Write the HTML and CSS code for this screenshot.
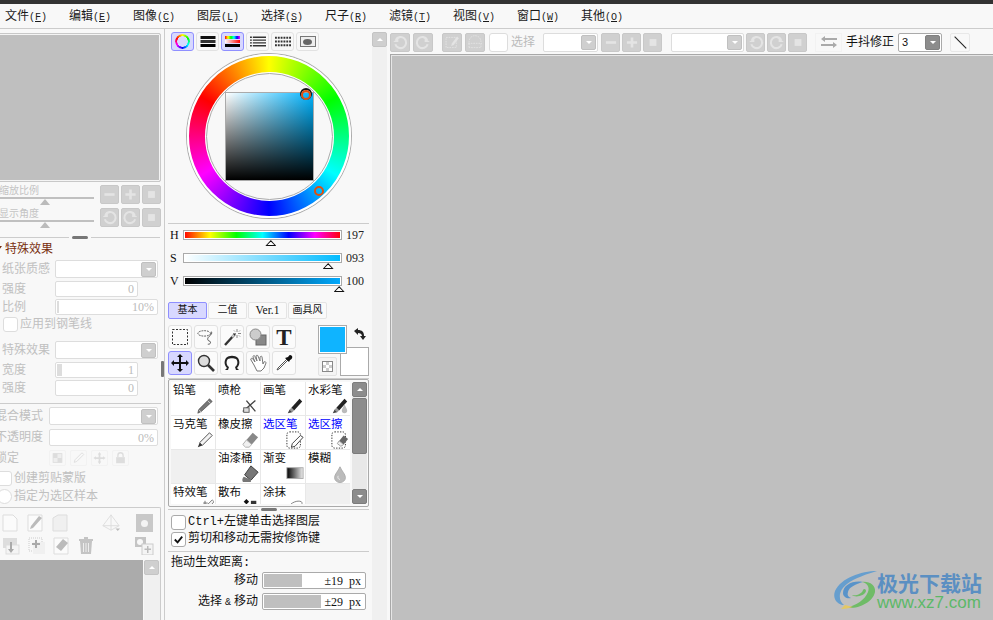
FILE: index.html
```html
<!DOCTYPE html>
<html lang="zh">
<head>
<meta charset="utf-8">
<title>SAI</title>
<link rel="stylesheet" href="styles.css">
</head>
<body>
<svg class="defs" width="0" height="0">
  <symbol id="minus" viewBox="0 0 20 20"><rect x="4" y="8.5" width="12" height="3" fill="#e4e4e4"/></symbol>
  <symbol id="plus" viewBox="0 0 20 20"><path d="M4 8.5h4.5V4h3v4.5H16v3h-4.5V16h-3v-4.5H4z" fill="#e4e4e4"/></symbol>
  <symbol id="square" viewBox="0 0 20 20"><rect x="6" y="6" width="8" height="8" fill="#e4e4e4"/></symbol>
  <symbol id="rotl" viewBox="0 0 20 20"><path d="M5 7a6.5 6.5 0 1 1-.5 5" fill="none" stroke="#e4e4e4" stroke-width="2.4"/><path d="M2 9.500h6v-5z" fill="#e4e4e4"/></symbol>
  <symbol id="rotr" viewBox="0 0 20 20"><path d="M15 7a6.500 6.500 0 1 0 .5 5" fill="none" stroke="#e4e4e4" stroke-width="2.400"/><path d="M18 9.500h-6v-5z" fill="#e4e4e4"/></symbol>
  <symbol id="pencil" viewBox="0 0 20 20"><path d="M15 2l3 3L6 16l-4 2 1-4z" fill="#777" stroke="#444" stroke-width=".7"/><path d="M13 4l3 3" stroke="#ddd"/><path d="M3 14l3 3" stroke="#ccc"/></symbol>
  <symbol id="pen" viewBox="0 0 20 20"><path d="M15 2l3 3-9 10-3-3z" fill="#222"/><path d="M6 12l3 3-2 2-3-3z" fill="#999"/><path d="M4 14l3 3-5 1z" fill="#444"/></symbol>
  <symbol id="drop" viewBox="0 0 20 20"><path d="M10 2c2 5 6 8 6 12a6 5.500 0 0 1-12 0c0-4 4-7 6-12z" fill="#bbb" stroke="#aaa"/><path d="M8 12c-1 2 0 4 2 4" stroke="#eee" fill="none"/></symbol>
</svg>

<div class="topline"></div>
<nav class="menu">
  <span class="menu-item">文件<i>(<u>F</u>)</i></span>
  <span class="menu-item">编辑<i>(<u>E</u>)</i></span>
  <span class="menu-item">图像<i>(<u>C</u>)</i></span>
  <span class="menu-item">图层<i>(<u>L</u>)</i></span>
  <span class="menu-item">选择<i>(<u>S</u>)</i></span>
  <span class="menu-item">尺子<i>(<u>R</u>)</i></span>
  <span class="menu-item">滤镜<i>(<u>T</u>)</i></span>
  <span class="menu-item">视图<i>(<u>V</u>)</i></span>
  <span class="menu-item">窗口<i>(<u>W</u>)</i></span>
  <span class="menu-item">其他<i>(<u>O</u>)</i></span>
</nav>

<main class="main">
  <aside class="left">
    <div class="preview"></div>
    <div class="nav-row first">
      <div class="nav-slider"><span class="nav-label">缩放比例</span><div class="nav-track"><b class="nav-tri"></b></div></div>
      <div class="dbtns">
        <span class="dbtn"><svg><use href="#minus"/></svg></span><span class="dbtn"><svg><use href="#plus"/></svg></span><span class="dbtn"><svg><use href="#square"/></svg></span>
      </div>
    </div>
    <div class="nav-row">
      <div class="nav-slider"><span class="nav-label">显示角度</span><div class="nav-track"><b class="nav-tri"></b></div></div>
      <div class="dbtns">
        <span class="dbtn"><svg><use href="#rotl"/></svg></span><span class="dbtn"><svg><use href="#rotr"/></svg></span><span class="dbtn"><svg><use href="#square"/></svg></span>
      </div>
    </div>
    <div class="handle-row"><span class="hline"></span><span class="grip"></span><span class="hline"></span></div>
    <div class="fx-title"><span class="fx-arrow"></span>特殊效果</div>

    <div class="prow h18 m4"><span class="plabel">纸张质感</span><span class="field wide"><span class="ddbtn"></span></span></div>
    <div class="prow h16 m3"><span class="plabel">强度</span><span class="field short"><span class="fval">0</span></span></div>
    <div class="prow h16 m2"><span class="plabel">比例</span><span class="field wide"><span class="fbar w2"></span><span class="fval">10%</span></span></div>
    <div class="prow h15 m2"><span class="cbox dim"></span><span class="ctext dimtext">应用到钢笔线</span></div>
    <div class="prow h18 m9"><span class="plabel">特殊效果</span><span class="field wide"><span class="ddbtn"></span></span></div>
    <div class="prow h16 m3"><span class="plabel">宽度</span><span class="field short"><span class="fbar w4"></span><span class="fval">1</span></span></div>
    <div class="prow h16 m2"><span class="plabel">强度</span><span class="field short"><span class="fval">0</span></span></div>
    <div class="lsep"></div>
    <div class="prow h18 m3"><span class="plabel blend">混合模式</span><span class="field blendf"><span class="ddbtn"></span></span></div>
    <div class="prow h17 m4"><span class="plabel blend">不透明度</span><span class="field blendf"><span class="fval">0%</span></span></div>
    <div class="prow h16 m4">
      <span class="plabel blend">锁定</span>
      <span class="locks">
        <span class="lockb"><svg viewBox="0 0 16 16"><rect x="3" y="3" width="10" height="10" fill="#eee" stroke="#ddd"/><rect x="3" y="3" width="5" height="5" fill="#ddd"/><rect x="8" y="8" width="5" height="5" fill="#ddd"/></svg></span>
        <span class="lockb"><svg viewBox="0 0 16 16"><path d="M12 2l2 2-8 8-3 1 1-3z" fill="none" stroke="#ddd"/></svg></span>
        <span class="lockb"><svg viewBox="0 0 16 16"><path d="M8 1l2 3H9v3h3V6l3 2-3 2V9H9v3h1l-2 3-2-3h1V9H4v1L1 8l3-2v1h3V4H6z" fill="#ddd"/></svg></span>
        <span class="lockb"><svg viewBox="0 0 16 16"><rect x="3" y="7" width="10" height="7" fill="#ddd"/><path d="M5 7V5a3 3 0 0 1 6 0v2" fill="none" stroke="#ddd" stroke-width="1.500"/></svg></span>
      </span>
    </div>
    <div class="prow h15 m5 outdent"><span class="cbox dim"></span><span class="ctext dimtext">创建剪贴蒙版</span></div>
    <div class="prow h15 m3 outdent"><span class="cbox dim round"></span><span class="ctext dimtext">指定为选区样本</span></div>

    <section class="layers">
      <div class="licons one">
        <svg class="li a" viewBox="0 0 16 18"><path d="M1 1h10l4 4v12H1z" fill="#fbfbfb" stroke="#ddd"/></svg>
        <svg class="li b" viewBox="0 0 16 18"><path d="M1 1h14v16H1z" fill="#fbfbfb" stroke="#ddd"/><path d="M12 2l3 2-9 10-3 1 1-3z" fill="#bbb"/></svg>
        <svg class="li c" viewBox="0 0 16 18"><path d="M1 4l5-3h9v16H1z" fill="#f0f0f0" stroke="#ddd"/></svg>
        <svg class="li d" viewBox="0 0 22 20"><path d="M11 1L2 13l9 5 9-5zM11 1v17M2 13h18" fill="none" stroke="#ddd"/><path d="M16 16h5l-2.500 3z" fill="#bbb"/></svg>
        <span class="li e"><span class="mask-dot"></span></span>
      </div>
      <div class="licons two">
        <svg class="li a2" viewBox="0 0 18 18"><rect x="1" y="1" width="14" height="10" fill="#ddd"/><rect x="4" y="8" width="13" height="9" fill="#f4f4f4" stroke="#ddd"/><path d="M10 5v7H8l3 4 3-4h-2V5z" fill="#aaa" transform="translate(-2)"/></svg>
        <svg class="li b2" viewBox="0 0 18 18"><rect x="1" y="1" width="13" height="13" fill="none" stroke="#ccc" stroke-dasharray="1 1"/><rect x="5" y="5" width="12" height="12" fill="#f0f0f0"/><path d="M4 6h3V3h2v3h3v2H9v3H7V8H4z" fill="#aaa"/></svg>
        <svg class="li c2" viewBox="0 0 16 18"><path d="M1 1h14v16H1z" fill="#fbfbfb" stroke="#ddd"/><path d="M10 2l5 4-7 8-5-4z" fill="#bbb"/></svg>
        <svg class="li d2" viewBox="0 0 16 18"><path d="M2 4h12l-1 13H3z" fill="#c4c4c4"/><rect x="1" y="2" width="14" height="2" fill="#c4c4c4"/><rect x="6" y="0" width="4" height="2" fill="#c4c4c4"/><path d="M5.500 6v9M8 6v9M10.500 6v9" stroke="#eee"/></svg>
        <svg class="li e2" viewBox="0 0 20 18"><rect x="1" y="0" width="11" height="10" fill="#c4c4c4"/><circle cx="6" cy="5" r="3" fill="#f8f8f8"/><rect x="8" y="7" width="11" height="11" fill="#f4f4f4" stroke="#ccc"/><path d="M10.500 11.500h2.500V9h1.500v2.500H17V13h-2.500v3H13v-3h-2.500z" fill="#bbb"/></svg>
      </div>
      <div class="lists">
        <div class="llist"></div>
        <div class="lscroll"><span class="sbtn up dim"></span></div>
      </div>
    </section>
    <span class="side-grip"></span>
  </aside>

  <section class="mid">
    <div class="modes">
      <span class="mode on"><span class="ring-ico"></span></span>
      <span class="mode"><svg viewBox="0 0 15 11"><rect y="0" width="15" height="3" fill="#111"/><rect y="4" width="15" height="3" fill="#333"/><rect y="8" width="15" height="3" fill="#000"/></svg></span>
      <span class="mode on"><span class="hsv-ico"></span></span>
      <span class="mode"><svg viewBox="0 0 17 11"><g stroke="#333" stroke-width="1.500"><path d="M0 1h17M0 4h17M0 7h17M0 10h17" stroke-dasharray="2 1 14"/></g></svg></span>
      <span class="mode"><svg viewBox="0 0 17 11"><path d="M0 1.500h17M0 5.500h17M0 9.500h17" stroke="#333" stroke-width="2" stroke-dasharray="2 1"/></svg></span>
      <span class="mode"><span class="blob-ico"><span></span></span></span>
    </div>
    <div class="wheel">
      <div class="hole"><div class="sv"></div></div>
      <span class="mark sv-mark"></span>
      <span class="mark hue-mark"></span>
    </div>
    <div class="msep first-sep"></div>
    <div class="hsv first-hsv"><span class="hsv-l">H</span><div class="hbar bar-h"><b class="tri" style="left:55%"></b></div><span class="hsv-v">197</span></div>
    <div class="hsv"><span class="hsv-l">S</span><div class="hbar bar-s"><b class="tri" style="left:91.500%"></b></div><span class="hsv-v">093</span></div>
    <div class="hsv"><span class="hsv-l">V</span><div class="hbar bar-v"><b class="tri" style="left:98.500%"></b></div><span class="hsv-v">100</span></div>

    <div class="tabs">
      <span class="tab on">基本</span><span class="tab">二值</span><span class="tab tab-lat">Ver.1</span><span class="tab">画具风</span>
    </div>

    <div class="toolzone">
      <div class="tools">
        <span class="tool"><svg viewBox="0 0 18 18"><rect x="1.500" y="1.500" width="15" height="15" fill="none" stroke="#333" stroke-dasharray="2 1.500"/></svg></span>
        <span class="tool"><svg viewBox="0 0 20 18"><ellipse cx="8" cy="5" rx="7" ry="3" fill="none" stroke="#444" stroke-dasharray="2 1"/><path d="M16 3c2 4-5 5-4 9 .5 2 3 1 3 3s-2 2-3 2" fill="none" stroke="#444"/></svg></span>
        <span class="tool"><svg viewBox="0 0 18 18"><path d="M2 17L12 6" stroke="#333" stroke-width="2.400"/><path d="M9 9l2-2" stroke="#ccc" stroke-width="2"/><path d="M14 1v3M14 7v3M10 5.500h3M15 5.500h3M11 2.500l1 1M16 7.500l1 1M17 2.500l-1 1" stroke="#888"/></svg></span>
        <span class="tool"><svg viewBox="0 0 18 18"><rect x="7" y="7" width="10" height="10" fill="#888" stroke="#666"/><circle cx="6.500" cy="6.500" r="5.500" fill="#ccc" stroke="#888"/></svg></span>
        <span class="tool tool-t">T</span>
        <span class="tool on"><svg viewBox="0 0 18 18"><path d="M9 0l3 3h-2v5h5V6l3 3-3 3v-2h-5v5h2l-3 3-3-3h2v-5H3v2L0 9l3-3v2h5V3H6z" fill="#111"/></svg></span>
        <span class="tool"><svg viewBox="0 0 18 18"><circle cx="7" cy="7" r="5.500" fill="#ddd" stroke="#333" stroke-width="1.400"/><path d="M11 11l6 6" stroke="#333" stroke-width="2.600"/></svg></span>
        <span class="tool"><svg viewBox="0 0 18 18"><path d="M5 16H2l2-2C1 11 1 7 3 4c3-3 9-3 12 0 2 3 2 7-1 10l2 2h-3l-1-3c3-2 3-6 1-8-2-1-6-1-8 0-2 2-2 6 1 8z" fill="#222"/></svg></span>
        <span class="tool"><svg viewBox="0 0 18 18"><path d="M5 11L2 6c-1-2 1-2 2-1l2 3-2-5c0-2 2-2 2 0l2 4-1-5c0-1 2-1 2 0l2 5 0-4c1-1 2-1 2 0l1 7 1-2c1-1 2 0 2 1l-2 5-3 3H8z" fill="#fff" stroke="#777"/></svg></span>
        <span class="tool"><svg viewBox="0 0 18 18"><path d="M12 5l-9 9-1 2 2-1 9-9" fill="#fff" stroke="#555"/><path d="M10 4l4 4 1-2c3-1 3-5 0-5-1 0-1 1-2 2z" fill="#111"/></svg></span>
      </div>
      <div class="swatches">
        <span class="bg-sw"></span>
        <span class="fg-sw"></span>
        <svg class="swap" viewBox="0 0 14 14"><path d="M1 3l4-3v2c4 0 6 2 6 6h2l-3 4-3-4h2c0-2-2-3-4-3v2z" fill="#222"/></svg>
        <span class="clear-btn"><span class="checker"></span></span>
      </div>
    </div>

    <div class="msep brush-sep"></div>
    <div class="brushes">
      <div class="bgrid">
        <div class="cell"><span>铅笔</span><svg><use href="#pencil"/></svg></div>
        <div class="cell"><span>喷枪</span><svg viewBox="0 0 20 20"><path d="M2 16l14-12M6 4l10 12" stroke="#444" stroke-width="1.500"/><rect x="3" y="12" width="6" height="5" fill="#ddd" stroke="#555"/></svg></div>
        <div class="cell"><span>画笔</span><svg><use href="#pen"/></svg></div>
        <div class="cell"><span>水彩笔</span><svg viewBox="0 0 20 20"><use href="#pen"/><path d="M15 8c1 3 3 5 3 7a3 3 0 0 1-6 0c0-2 2-4 3-7z" fill="#bbb"/></svg></div>
        <div class="cell"><span>马克笔</span><svg viewBox="0 0 20 20"><path d="M15 2l3 3L7 16l-3-3z" fill="#f4f4f4" stroke="#444"/><path d="M4 13l3 3-5 2z" fill="#333"/></svg></div>
        <div class="cell"><span>橡皮擦</span><svg viewBox="0 0 20 20"><path d="M13 2l6 5-7 8-6-5z" fill="#888"/><path d="M6 10l6 5-3 3H5l-3-3z" fill="#f0f0f0" stroke="#aaa"/></svg></div>
        <div class="cell sel"><span>选区笔</span><svg viewBox="0 0 20 20"><rect x="1" y="1" width="15" height="18" rx="3" fill="none" stroke="#222" stroke-dasharray="1.500 1.500"/><path d="M16 5l3 2-9 10-4 1 1-4z" fill="#fff" stroke="#333"/></svg></div>
        <div class="cell sel"><span>选区擦</span><svg viewBox="0 0 20 20"><rect x="1" y="1" width="15" height="18" rx="3" fill="none" stroke="#222" stroke-dasharray="1.500 1.500"/><path d="M14 5l5 4-5 6-5-4z" fill="#666"/><path d="M9 11l5 4-3 2-4-3z" fill="#eee" stroke="#999"/></svg></div>
        <div class="cell empty"></div>
        <div class="cell"><span>油漆桶</span><svg viewBox="0 0 20 20"><path d="M11 1l8 7-8 9-7-6z" fill="#777" stroke="#333"/><path d="M3 13c-2 2-2 6 0 6h8v-3z" fill="#777"/></svg></div>
        <div class="cell"><span>渐变</span><svg viewBox="0 0 20 20"><defs><linearGradient id="grad"><stop offset="0" stop-color="#000"/><stop offset="1" stop-color="#eee"/></linearGradient></defs><rect x="1" y="3" width="18" height="12" fill="url(#grad)" stroke="#aaa"/></svg></div>
        <div class="cell"><span>模糊</span><svg><use href="#drop"/></svg></div>
        <div class="cell"><span>特效笔</span><svg viewBox="0 0 20 20"><path d="M2 10h6M5 7v6M10 2v5M8 4.500h5" stroke="#666"/><path d="M18 1l2 2-6 7-3-2z" fill="#f4f4f4" stroke="#777"/></svg></div>
        <div class="cell"><span>散布</span><svg viewBox="0 0 20 20"><path d="M6 0l3 3-3 3-3-3z" fill="#111"/><rect x="11" y="2" width="6" height="4" fill="#333"/></svg></div>
        <div class="cell"><span>涂抹</span><svg viewBox="0 0 20 20"><path d="M3 9c2-5 10-8 14-6 2 2 0 4-2 4-3 1-6 3-7 6z" fill="#fff" stroke="#777"/></svg></div>
        <div class="cell empty"></div>
      </div>
      <div class="bscroll">
        <span class="sbtn up dark"></span>
        <div class="btrack"><span class="bthumb"></span></div>
        <span class="sbtn down dark"></span>
      </div>
    </div>
    <div class="handle-row mid-handle"><span class="hline"></span><span class="grip"></span><span class="hline"></span></div>

    <div class="crow cr1"><span class="cbox"></span><span class="ctext">Ctrl+左键单击选择图层</span></div>
    <div class="crow cr2"><span class="cbox"><svg viewBox="0 0 14 14"><path d="M3 7l3 3 5-6" fill="none" stroke="#111" stroke-width="2"/></svg></span><span class="ctext">剪切和移动无需按修饰键</span></div>
    <div class="msep last-sep"></div>
    <div class="drag-title">拖动生效距离:</div>
    <div class="drow dr1"><span class="dlabel">移动</span><div class="dbox"><b class="dfill f19"></b><span class="dval">±19 px</span></div></div>
    <div class="drow dr2"><span class="dlabel">选择<i class="amp">&amp;</i>移动</span><div class="dbox"><b class="dfill f29"></b><span class="dval">±29 px</span></div></div>
  </section>

  <div class="vscroll">
    <span class="sbtn up dim"></span>
    <div class="vtrack"></div>
  </div>

  <section class="work">
    <div class="toolbar">
      <span class="tb t1"><svg><use href="#rotl"/></svg></span>
      <span class="tb t2"><svg><use href="#rotr"/></svg></span>
      <span class="tb t3"><svg viewBox="0 0 20 20"><rect x="3" y="4" width="12" height="12" fill="none" stroke="#e4e4e4" stroke-dasharray="2 1"/><path d="M16 3l2 2-6 8-3 1 1-3z" fill="#e4e4e4"/></svg></span>
      <span class="tb t2"><svg viewBox="0 0 20 20"><path d="M3 16V9a7 7 0 0 1 14 0v7zM2 11h16" fill="none" stroke="#e4e4e4" stroke-dasharray="2 1"/></svg></span>
      <span class="tb-check"></span>
      <span class="tb-label">选择</span>
      <span class="field tb-sel s1"><span class="ddbtn"></span></span>
      <span class="tb t5"><svg><use href="#minus"/></svg></span>
      <span class="tb t6"><svg><use href="#plus"/></svg></span>
      <span class="tb t6"><svg><use href="#square"/></svg></span>
      <span class="field tb-sel s2"><span class="ddbtn"></span></span>
      <span class="tb t6"><svg><use href="#rotl"/></svg></span>
      <span class="tb t6"><svg><use href="#rotr"/></svg></span>
      <span class="tb t6"><svg><use href="#square"/></svg></span>
      <span class="tb-swap"><svg viewBox="0 0 16 14"><path d="M0 4l4-3v2h12v2H4v2zM16 10l-4-3v2H0v2h12v2z" fill="#aaa"/></svg></span>
      <span class="tb-text">手抖修正</span>
      <span class="stab"><span class="stab-v">3</span><span class="ddbtn dark"></span></span>
      <span class="tb-line"><svg viewBox="0 0 20 19"><path d="M4 3l13 13" stroke="#222" stroke-width="1.200"/></svg></span>
    </div>
    <div class="canvas"></div>
  </section>
</main>

<div class="wm">
  <svg class="wm-logo" viewBox="0 0 46 40">
    <path d="M44 1C28 1 8 8 2 21c-3 8 3 14 9 14C5 30 5 21 14 14 22 8 34 4 44 1z" fill="#5d9bd0"/>
    <path d="M30 12c-10-2-20 3-20 11 0 4 4 6 8 5-3-1-4-3-3-6 1-5 8-8 15-10z" fill="#4f8fcb"/>
    <path d="M14 38c12 1 26-6 28-16 1-7-6-11-13-10 5 1 8 5 6 10-3 8-12 13-21 16z" fill="#67bb5e"/>
    <path d="M30 20c-1 4-7 6-11 5 3 3 13 1 14-4 0-2-2-3-3-1z" fill="#67bb5e"/>
    <path d="M8 39c4 0 8-1 12-2l-8-2z" fill="#e8c95a"/>
  </svg>
  <div class="wm-text"><div class="wm-cn">极光下载站</div><div class="wm-url">www.xz7.com</div></div>
</div>
</body>
</html>
```
FILE: styles.css
```css
* { box-sizing: border-box; }
html, body { margin: 0; padding: 0; }
body {
  width: 993px; height: 620px; overflow: hidden; position: relative;
  background: #f8f8f8; color: #111;
  font: 12px/1 "Liberation Mono", "Noto Sans CJK SC", monospace;
}
.defs { position: absolute; }
i { font-style: normal; font-size: 10px; }
svg { display: block; }

.topline { height: 4px; background: #333; }
.menu { height: 25px; display: flex; gap: 22px; padding: 6px 0 0 5px; border-bottom: 1px solid #ccc; }
.menu-item { width: 42px; white-space: nowrap; line-height: 14px; color: #1a1a1a; }

.main { display: flex; height: 591px; }

/* left panel */
.left { position: relative; width: 165px; flex: none; border-right: 1px solid #ccc; overflow: hidden; }
.preview { width: 164px; height: 149px; margin: 4px 0 0 -3px; background: #bfbfbf; border: 1px solid #c8c8c8; box-shadow: inset 0 0 0 1px #f4f4f4; border-radius: 0 2px 2px 0; }
.nav-row { display: flex; height: 19px; margin-top: 4px; }
.nav-row.first { margin-top: 3px; }
.nav-slider { width: 100px; flex: none; }
.nav-label { display: block; height: 12px; margin-left: -1px; color: #c4c4c4; font-size: 10px; line-height: 13px; white-space: nowrap; }
.nav-track { position: relative; width: 94px; height: 2px; background: #c0c0c0; }
.nav-tri { position: absolute; left: 40px; top: 2px; width: 0; height: 0; border: 5px solid transparent; border-top: 0; border-bottom: 6px solid #bbb; }
.dbtns { display: flex; gap: 2px; }
.dbtn { width: 19px; height: 19px; background: #d0d0d0; border: 1px solid #c8c8c8; border-radius: 2px; }
.dbtn svg { width: 17px; height: 17px; }

.handle-row { display: flex; align-items: center; gap: 3px; height: 3px; margin-top: 9px; width: 160px; }
.hline { flex: 1; height: 1px; background: #ccc; }
.grip { width: 16px; height: 3px; background: #777; border-radius: 2px; }
.fx-title { height: 16px; margin-top: 1px; padding: 2px 0 0 5px; line-height: 16px; color: #7a3010; position: relative; }
.fx-arrow { position: absolute; left: -4px; top: 6px; border: 3px solid transparent; border-top: 4px solid #7a3010; }

.prow { display: flex; align-items: center; }
.h18 { height: 18px; } .h17 { height: 17px; } .h16 { height: 16px; } .h15 { height: 15px; }
.m2 { margin-top: 2px; } .m3 { margin-top: 3px; } .m4 { margin-top: 4px; } .m5 { margin-top: 5px; } .m9 { margin-top: 9px; }
.plabel { width: 55px; flex: none; padding: 1px 0 0 2px; color: #c0c0c0; white-space: nowrap; }
.plabel.blend { width: 54px; margin-left: -5px; padding-left: 0; }
.field { position: relative; display: flex; align-items: center; height: 100%; background: #fff; border: 1px solid #ddd; border-radius: 2px; }
.wide { width: 103px; } .short { width: 83px; } .blendf { width: 109px; }
.ddbtn { position: absolute; right: 1px; top: 50%; width: 15px; height: 15px; margin-top: -7.500px; background: #cfcfcf; border: 1px solid #c0c0c0; border-radius: 2px; }
.ddbtn::after { content: ""; position: absolute; left: 4px; top: 5px; border: 3px solid transparent; border-top: 3px solid #fff; }
.ddbtn.dark { background: #8c8c8c; border-color: #808080; }
.fval { margin-left: auto; padding-right: 3px; color: #bbb; font: 12px/1 "Liberation Serif", serif; }
.fbar { height: 12px; background: #ddd; margin-left: 1px; }
.fbar.w2 { width: 2px; } .fbar.w4 { width: 5px; }

.cbox { width: 15px; height: 15px; flex: none; background: #fff; border: 1px solid #aaa; border-radius: 3px; }
.cbox.dim { border-color: #ddd; margin-left: 3px; }
.cbox.round { border-radius: 50%; }
.outdent { margin-left: -6px; }
.ctext { margin-left: 2px; white-space: nowrap; }
.dimtext { color: #c0c0c0; }
.lsep { height: 1px; margin-top: 7px; width: 161px; background: #ccc; }
.locks { display: flex; gap: 4px; }
.lockb { width: 17px; height: 16px; border: 1px solid #f2f2f2; border-radius: 2px; }
.lockb svg { width: 15px; height: 14px; }

.layers { position: relative; width: 161px; height: 113px; margin-top: 3px; border: 1px solid #ccc; border-left: 0; border-bottom: 0; border-radius: 0 2px 0 0; padding-top: 6px; }
.licons { position: relative; display: flex; }
.licons.one { height: 18px; }
.licons.two { height: 18px; margin-top: 5px; }
.li { flex: none; height: 18px; }
.a { width: 16px; margin-left: 2px; } .b { width: 16px; margin-left: 9px; } .c { width: 16px; margin-left: 9px; }
.d { width: 22px; margin-left: 32px; }
.e { width: 17px; margin-left: 14px; background: #c8c8c8; display: flex; align-items: center; justify-content: center; }
.mask-dot { width: 7px; height: 7px; border-radius: 50%; background: #f4f4f4; }
.a2 { width: 18px; margin-left: 2px; } .b2 { width: 18px; margin-left: 8px; } .c2 { width: 16px; margin-left: 7px; } .d2 { width: 16px; margin-left: 9px; }
.e2 { width: 20px; margin-left: 40px; }
.lists { display: flex; margin-top: 5px; height: 61px; }
.llist { width: 143px; background: #ababab; }
.lscroll { width: 16px; margin-left: 1px; background: #f0f0f0; }
.side-grip { position: absolute; right: 0; top: 332px; width: 3px; height: 16px; background: #777; border-radius: 1px; }

/* scroll buttons */
.sbtn { display: block; position: relative; width: 15px; height: 15px; border-radius: 2px; flex: none; }
.sbtn.dim { background: #cfcfcf; border: 1px solid #c4c4c4; }
.sbtn.dark { background: #8c8c8c; border: 1px solid #7c7c7c; }
.sbtn::after { content: ""; position: absolute; left: 3.500px; border: 3.500px solid transparent; }
.sbtn.up::after { top: 1.500px; border-bottom-color: #fff; }
.sbtn.down::after { top: 4.500px; border-top-color: #fff; }

/* middle panel */
.mid { width: 207px; flex: none; padding-top: 3px; position: relative; }
.modes { display: flex; gap: 2px; margin-left: 6px; }
.mode { width: 23px; height: 19px; display: flex; align-items: center; justify-content: center; background: #f8f8f8; border: 1px solid #e2e2e2; border-radius: 3px; }
.mode.on { background: #d8d8ff; border-color: #8f8fff; }
.mode svg { width: 16px; height: 11px; }
.ring-ico { width: 15px; height: 15px; border-radius: 50%; background: conic-gradient(#ff0, #0f0, #0ff, #00f, #f0f, #f00, #ff0); -webkit-mask: radial-gradient(circle, transparent 5px, #000 5.500px); mask: radial-gradient(circle, transparent 5px, #000 5.500px); }
.hsv-ico { width: 15px; height: 11px; background: linear-gradient(#000 0 0) 0 100%/100% 3px no-repeat, linear-gradient(90deg, #fff, #f00) 0 50%/100% 3px no-repeat, linear-gradient(90deg, #f00, #ff0, #0f0, #0ff, #00f, #f0f) 0 0/100% 3px no-repeat; }
.blob-ico { width: 16px; height: 11px; border: 1px solid #777; background: #eee; display: flex; align-items: center; justify-content: center; }
.blob-ico span { width: 9px; height: 6px; border-radius: 50%; background: #666; }

.wheel { position: relative; width: 164px; height: 164px; margin: 3px 0 0 22px; border-radius: 50%; display: flex; align-items: center; justify-content: center; background: conic-gradient(#ff0, #0f0, #0ff, #00f, #f0f, #f00, #ff0); border: 2px solid #fff; box-shadow: 0 0 0 1px #aaa; }
.hole { width: 127px; height: 127px; border-radius: 50%; background: #f8f8f8; border: 1px solid #aaa; box-shadow: 0 0 0 1px #fff; display: flex; align-items: center; justify-content: center; }
.sv { width: 89px; height: 89px; border: 1px solid #aaa; background: linear-gradient(to top, #000, transparent), linear-gradient(to right, #fff, #00b4ff); }
.mark { position: absolute; width: 10px; height: 10px; border-radius: 50%; border: 2px solid #e0500f; }
.sv-mark { left: 112px; top: 34px; box-shadow: 0 -1px 0 1px #111; }
.hue-mark { left: 125px; top: 130px; }

.msep { height: 1px; background: #ccc; margin-left: 3px; width: 201px; }
.first-sep { margin-top: 5px; }
.hsv { display: flex; height: 23px; padding-left: 3px; }
.first-hsv { margin-top: 6px; }
.hsv-l { width: 15px; height: 10px; line-height: 10px; font: 12px/10px "Liberation Serif", serif; padding-left: 2px; }
.hbar { position: relative; width: 159px; height: 10px; border: 1px solid #aaa; box-shadow: inset 0 0 0 1px #fff; }
.bar-h { background: linear-gradient(90deg, #f00, #ff0, #0f0, #0ff, #00f, #f0f, #f00); }
.bar-s { background: linear-gradient(90deg, #fff, #0bf); }
.bar-v { background: linear-gradient(90deg, #000, #0af); }
.tri { position: absolute; top: 9px; margin-left: -5px; width: 11px; height: 6px; }
.tri::before { content: ""; position: absolute; inset: 0; background: #111; clip-path: polygon(50% 0, 100% 100%, 0 100%); }
.tri::after { content: ""; position: absolute; inset: 1.500px 2px 1px; background: #fff; clip-path: polygon(50% 0, 100% 100%, 0 100%); }
.hsv-v { margin-left: 4px; font: 12px/10px "Liberation Serif", serif; color: #222; }

.tabs { display: flex; gap: 1px; margin: 3px 0 0 3px; }
.tab { width: 39px; height: 17px; display: flex; align-items: center; justify-content: center; background: #fafafa; border: 1px solid #e4e4e4; border-radius: 2px; font-size: 10px; white-space: nowrap; }
.tab.on { background: #d8d8ff; border-color: #8f8fff; }
.tab-lat { font: 11.500px/1 "Liberation Serif", serif; }

.toolzone { display: flex; margin: 6px 0 0 3px; }
.tools { display: grid; grid-template-columns: repeat(5, 24px); grid-auto-rows: 24px; gap: 2px; }
.tool { display: flex; align-items: center; justify-content: center; background: #fbfbfb; border: 1px solid #e2e2e2; border-radius: 3px; }
.tool svg { width: 18px; height: 18px; }
.tool.on { background: #d8d8ff; border-color: #8f8fff; }
.tool-t { font: bold 23px/1 "Liberation Serif", serif; color: #222; }
.swatches { position: relative; width: 51px; height: 51px; margin-left: 22px; }
.fg-sw { position: absolute; left: 0; top: 0; width: 29px; height: 29px; background: #0fb4ff; border: 1px solid #aaa; box-shadow: inset 0 0 0 1px #fff; }
.bg-sw { position: absolute; right: 0; bottom: 0; width: 29px; height: 29px; background: #fff; border: 1px solid #aaa; }
.swap { position: absolute; left: 35px; top: 3px; width: 14px; height: 14px; }
.clear-btn { position: absolute; left: 0; bottom: 0; width: 19px; height: 19px; display: flex; align-items: center; justify-content: center; background: #f4f4f4; border: 1px solid #e2e2e2; border-radius: 2px; }
.checker { width: 11px; height: 11px; border: 1px solid #888; background: conic-gradient(#ccc 25%, #fff 0 50%, #ccc 0 75%, #fff 0) 0 0/6px 6px; }

.brush-sep { margin-top: 2px; }
.brushes { display: flex; width: 201px; height: 128px; margin-left: 3px; border: 1px solid #aaa; border-radius: 2px; padding: 2px; }
.bgrid { display: grid; grid-template-columns: repeat(4, 44px); grid-auto-rows: 33px; gap: 1px; height: 122px; overflow: hidden; background: #e8e8e8; flex: none; }
.cell { background: #fff; padding: 3px 0 0 2px; font-size: 11.500px; line-height: 12px; color: #111; display: flex; flex-direction: column; }
.cell span { display: block; height: 12px; white-space: nowrap; }
.cell svg { width: 18px; height: 18px; flex: none; margin: 0 1px 0 auto; }
.cell.sel { color: #00f; }
.cell.empty { background: #f0f0f0; }
.bscroll { display: flex; flex-direction: column; width: 15px; margin-left: 2px; }
.btrack { flex: 1; background: #e8e8e8; padding-top: 1px; }
.bthumb { display: block; height: 56px; background: #8c8c8c; border: 1px solid #7c7c7c; border-radius: 2px; }
.mid-handle { width: 201px; margin: 1px 0 0 3px; }

.crow { display: flex; align-items: center; height: 15px; margin-left: 6px; line-height: 15px; color: #111; }
.cr1 { margin-top: 4px; } .cr2 { margin-top: 2px; }
.cbox svg { width: 13px; height: 13px; }
.last-sep { margin-top: 4px; }
.drag-title { height: 16px; margin: 3px 0 0 6px; line-height: 16px; }
.drow { display: flex; align-items: center; height: 17px; }
.dr1 { margin-top: 1px; } .dr2 { margin-top: 4px; }
.dlabel { width: 93px; text-align: right; white-space: nowrap; }
.amp { margin: 0 3px; }
.dbox { position: relative; width: 104px; height: 100%; margin-left: 4px; background: #fff; border: 1px solid #aaa; border-radius: 2px; display: flex; align-items: center; justify-content: flex-end; }
.dfill { position: absolute; left: 1px; top: 1px; bottom: 1px; background: #bfbfbf; }
.f19 { width: 38px; } .f29 { width: 57px; }
.dval { position: relative; padding-right: 4px; font: 12px/1 "Liberation Serif", serif; word-spacing: 3px; white-space: nowrap; }

.vscroll { width: 15px; flex: none; display: flex; flex-direction: column; padding-top: 3px; }
.vtrack { flex: 1; background: #f0f0f0; }

.work { flex: 1; min-width: 0; display: flex; flex-direction: column; }
.toolbar { display: flex; align-items: center; height: 25px; padding: 1px 0 0 3px; }
.tb { width: 20px; height: 19px; background: #d0d0d0; border: 1px solid #c8c8c8; border-radius: 2px; flex: none; }
.tb svg { width: 18px; height: 17px; }
.t2 { margin-left: 3px; }
.t3 { margin-left: 9px; }
.t5 { width: 19px; margin-left: 3px; }
.t6 { width: 19px; margin-left: 2px; }
.tb-check { width: 19px; height: 19px; margin-left: 4px; background: #fff; border: 1px solid #ddd; border-radius: 3px; flex: none; }
.tb-label { margin-left: 3px; width: 24px; padding-top: 1px; color: #bbb; white-space: nowrap; }
.tb-sel { height: 19px; flex: none; }
.s1 { width: 55px; margin-left: 8px; }
.s2 { width: 73px; margin-left: 9px; }
.tb-swap { width: 27px; height: 19px; margin-left: 8px; border: 1px solid #f2f2f2; display: flex; align-items: center; justify-content: center; flex: none; }
.tb-swap svg { width: 16px; height: 14px; }
.tb-text { margin-left: 4px; width: 48px; padding-top: 1px; white-space: nowrap; color: #111; }
.stab { position: relative; width: 44px; height: 19px; margin-left: 4px; background: #fff; border: 1px solid #aaa; border-radius: 2px; flex: none; padding-left: 3px; line-height: 17px; font-size: 11px; font-family: "Liberation Sans", sans-serif; }
.tb-line { width: 20px; height: 19px; margin-left: 8px; border: 1px solid #e8e8e8; border-radius: 2px; flex: none; }
.tb-line svg { width: 18px; height: 17px; }
.canvas { flex: 1; margin-left: 3px; background: #bfbfbf; border-top: 1px solid #a8a8a8; border-left: 1px solid #a8a8a8; box-shadow: inset 1px 1px 0 #e6e6e6; }

/* watermark */
.wm { position: absolute; left: 833px; top: 570px; display: flex; }
.wm-logo { width: 46px; height: 40px; flex: none; opacity: .9; }
.wm-text { margin-left: -2px; }
.wm-cn { font: bold 21px/24px "Noto Sans CJK SC", sans-serif; color: #5b8fc2; white-space: nowrap; }
.wm-url { font: 17px/14px "Liberation Sans", sans-serif; color: #5cb868; margin-top: 2px; white-space: nowrap; }
```
